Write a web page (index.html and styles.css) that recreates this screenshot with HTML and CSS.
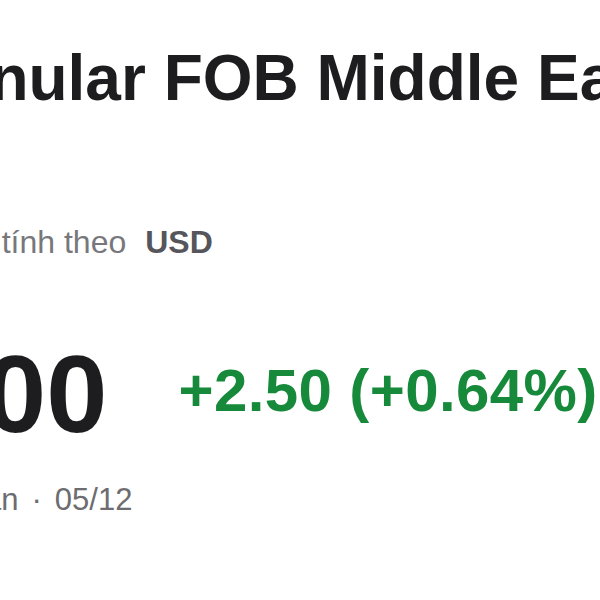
FILE: index.html
```html
<!DOCTYPE html>
<html lang="vi">
<head>
<meta charset="utf-8">
<link rel="stylesheet" href="styles.css">
</head>
<body>
<main class="page">
  <h1 class="title">Urea Granular FOB Middle East</h1>
  <p class="unit"><span class="unit-label">Giá tính theo</span><strong class="unit-cur">USD</strong></p>
  <div class="price-row">
    <span class="price">393.00</span>
    <span class="change">+2.50 (+0.64%)</span>
  </div>
  <p class="meta"><span>Kỳ hạn</span><span class="sep">·</span><span>05/12</span></p>
</main>
</body>
</html>
```
FILE: styles.css
```css
html, body {
  margin: 0;
  padding: 0;
  background: #ffffff;
}
body {
  font-family: "Liberation Sans", Arial, sans-serif;
  overflow: hidden;
}
.page {
  width: 600px;
  height: 600px;
  overflow: hidden;
  padding-top: 42px;
  box-sizing: border-box;
}
.title {
  margin: 0 0 0 -281px;
  font-size: 64px;
  line-height: 72px;
  font-weight: 700;
  color: #1d1d1f;
  white-space: nowrap;
}
.unit {
  margin: 109px 0 0 -57px;
  font-size: 32px;
  line-height: 38px;
  white-space: nowrap;
  color: #77777c;
  display: flex;
  gap: 19px;
}
.unit-cur {
  font-weight: 700;
  color: #55555b;
}
.price-row {
  margin: 73px 0 0 -229px;
  display: flex;
  align-items: center;
  gap: 71px;
  white-space: nowrap;
}
.price {
  font-size: 110px;
  line-height: 120px;
  font-weight: 700;
  color: #1d1d1f;
}
.change {
  font-size: 60px;
  line-height: 66px;
  font-weight: 700;
  letter-spacing: 0.4px;
  color: #168a3a;
  position: relative;
  top: -3px;
}
.meta {
  margin: 28px 0 0 -78px;
  font-size: 31px;
  line-height: 36px;
  color: #6c6c71;
  white-space: nowrap;
  display: flex;
  gap: 13px;
}
```
